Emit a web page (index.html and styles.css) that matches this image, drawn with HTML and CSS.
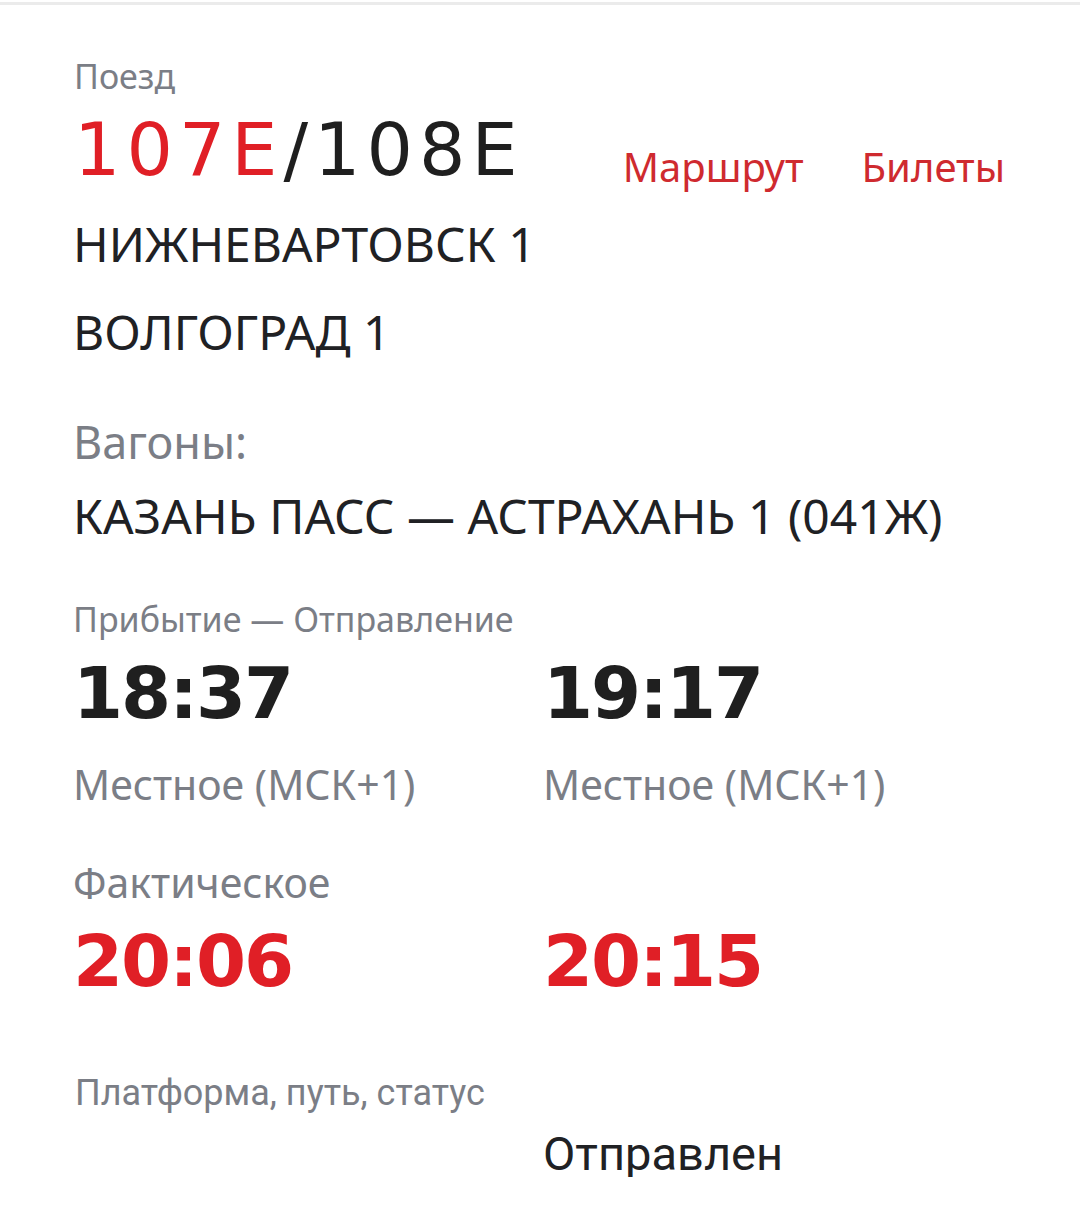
FILE: index.html
```html
<!DOCTYPE html>
<html lang="ru">
<head>
<meta charset="utf-8">
<link rel="stylesheet" href="styles.css">
</head>
<body>
<div class="topline"></div>
<main class="page">
  <header class="head">
    <div class="train">
      <div class="label label-train">Поезд</div>
      <div class="number"><span class="red">107E</span>/108E</div>
    </div>
    <nav class="links">
      <a class="link">Маршрут</a>
      <a class="link">Билеты</a>
    </nav>
  </header>
  <div class="station st1">НИЖНЕВАРТОВСК 1</div>
  <div class="station st2">ВОЛГОГРАД 1</div>
  <div class="label label-cars">Вагоны:</div>
  <div class="station st3">КАЗАНЬ ПАСС — АСТРАХАНЬ 1 (041Ж)</div>
  <div class="label label-arr">Прибытие — Отправление</div>
  <div class="grid times">
    <div class="time">18:37</div>
    <div class="time">19:17</div>
  </div>
  <div class="grid locals">
    <div class="local">Местное (МСК+1)</div>
    <div class="local">Местное (МСК+1)</div>
  </div>
  <div class="label label-fact">Фактическое</div>
  <div class="grid facts">
    <div class="time red">20:06</div>
    <div class="time red">20:15</div>
  </div>
  <div class="label label-plat">Платформа, путь, статус</div>
  <div class="grid status">
    <div></div>
    <div class="state">Отправлен</div>
  </div>
</main>
</body>
</html>
```

FILE: styles.css
```css
html, body {
  margin: 0;
  padding: 0;
  background: #ffffff;
}
body {
  font-family: "Noto Sans", "Open Sans", sans-serif;
  color: #202124;
}
.topline {
  height: 3px;
  margin-top: 2px;
  background: #ebebeb;
}
.page {
  padding: 54px 75px 0 73px;
}
.head {
  display: flex;
  justify-content: space-between;
  align-items: flex-start;
}
.label {
  color: #7b7e86;
  line-height: 1;
}
.label-train {
  font-size: 34px;
  margin-left: 1px;
}
.number {
  font-family: "DejaVu Sans", sans-serif;
  font-size: 73px;
  line-height: 1;
  letter-spacing: 6px;
  margin-top: 20px;
  margin-left: 1px;
  color: #1f1f1f;
}
.red {
  color: #e01f26;
}
.links {
  display: flex;
  gap: 58px;
  margin-top: 88px;
}
.link {
  font-size: 40px;
  line-height: 1;
  color: #cf2a2f;
}
.station {
  font-size: 48px;
  line-height: 1;
  color: #202124;
}
.st1 { margin-top: 33px; }
.st2 { margin-top: 40px; }
.label-cars {
  font-size: 45px;
  margin-top: 63px;
}
.st3 { margin-top: 28px; }
.label-arr {
  font-size: 34px;
  margin-top: 62px;
}
.grid {
  display: grid;
  grid-template-columns: 470px 1fr;
}
.time {
  font-family: "DejaVu Sans", sans-serif;
  font-weight: bold;
  font-size: 72px;
  line-height: 1;
  letter-spacing: -2px;
  color: #1f1f1f;
}
.time.red {
  color: #e01f26;
}
.times { margin-top: 21px; }
.locals { margin-top: 35px; }
.local {
  font-size: 41px;
  line-height: 1;
  color: #7b7e86;
}
.label-fact {
  font-size: 41px;
  margin-top: 57px;
}
.facts { margin-top: 22px; }
.label-plat {
  font-family: Roboto, sans-serif;
  font-size: 36px;
  margin-top: 78px;
  margin-left: 2px;
}
.status { margin-top: 19px; }
.state {
  font-family: Roboto, sans-serif;
  font-size: 47px;
  line-height: 1;
  color: #202124;
}
```
